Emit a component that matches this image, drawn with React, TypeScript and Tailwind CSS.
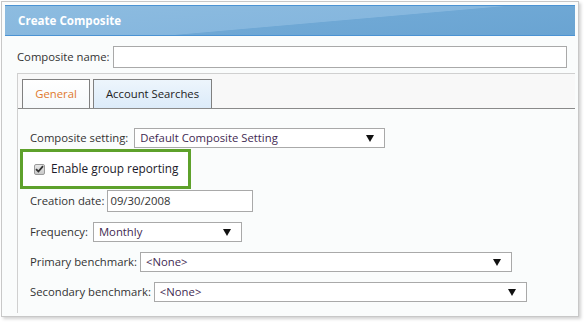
const font = { fontFamily: '"Open Sans", "Noto Sans", sans-serif' };

function Arrow() {
  return (
    <svg width="8" height="7" viewBox="0 0 8 7" className="shrink-0">
      <path d="M0 0 H8 L4 7 Z" fill="#111" />
    </svg>
  );
}

function Select({ value, className }: { value: string; className: string }) {
  return (
    <div
      className={`flex h-[20px] items-center justify-between border border-[#a9a9a9] bg-white pl-[5px] pr-[10px] text-[#3f2a52] ${className}`}
    >
      <span>{value}</span>
      <Arrow />
    </div>
  );
}

function Row({ label, children, className = '' }: { label: string; children: React.ReactNode; className?: string }) {
  return (
    <div className={`flex items-center gap-[3px] ${className}`}>
      <span className="text-[#333]">{label}</span>
      {children}
    </div>
  );
}

export default function App() {
  return (
    <div className="h-[326px] w-[588px] bg-white pl-[1px] pt-[1px] text-[11.3px] leading-none" style={font}>
      <div className="flex h-[316px] w-[578px] flex-col border border-[#c8c8c8] bg-[#fafcfc] p-[3px] shadow-[2px_2px_3px_rgba(0,0,0,0.18)]">
        {/* title bar */}
        <div className="flex h-[31px] shrink-0 items-center border-y border-[#4b93d3] bg-[linear-gradient(175deg,#8dbce0_0%,#86b7de_55%,#6fa8d5_56%,#6aa4d2_100%)] pl-[13px]">
          <span className="text-[11.6px] font-bold text-white">Create Composite</span>
        </div>

        <Row label="Composite name:" className="ml-[12px] mt-[10px]">
          <div className="h-[22px] w-[454px] border border-[#a9a9a9] bg-white" />
        </Row>

        {/* tabs panel */}
        <div className="ml-[12px] mt-[5px] flex flex-1 flex-col border-l border-t border-[#d0d0d0]">
          <div className="flex h-[35px] shrink-0 items-end gap-[3px] border-b border-[#8a8a8a] bg-[#f8f8f8] pl-[4px]">
            <div className="flex h-[29px] w-[68px] items-center justify-center border border-b-0 border-[#808080] bg-[linear-gradient(#ffffff,#f6f9fb)] text-[#e0782c]">
              General
            </div>
            <div className="flex h-[29px] w-[119px] items-center justify-center border border-b-0 border-[#808080] bg-[linear-gradient(#edf5fc,#dcebf9)] text-[#222]">
              Account Searches
            </div>
          </div>

          <div className="flex flex-col pl-[12px]">
            <Row label="Composite setting:" className="mt-[19px]">
              <Select value="Default Composite Setting" className="ml-[3px] w-[251px]" />
            </Row>

            <div className="ml-[-10px] mt-[1px] flex h-[40px] w-[171px] items-center gap-[6px] border-[3px] border-[#5ea12b] bg-white pl-[11px]">
              <div className="flex h-[11px] w-[11px] items-center justify-center rounded-[2px] border border-[#9a9a9a] bg-[linear-gradient(#e8e8e8,#c9c9c9)]">
                <svg width="9" height="8" viewBox="0 0 9 8">
                  <path d="M1 4.2 L3.4 6.5 L8 1.2" stroke="#333" strokeWidth="1.8" fill="none" />
                </svg>
              </div>
              <span className="text-[11.8px] text-[#1c1a2a]">Enable group reporting</span>
            </div>

            <Row label="Creation date:" className="mt-[1px]">
              <div className="flex h-[22px] w-[146px] items-center border border-[#a9a9a9] bg-white pl-[2px] text-[#333]">
                09/30/2008
              </div>
            </Row>

            <Row label="Frequency:" className="mt-[10px]">
              <Select value="Monthly" className="ml-[2px] w-[149px]" />
            </Row>

            <Row label="Primary benchmark:" className="mt-[10px]">
              <Select value="<None>" className="w-[372px]" />
            </Row>

            <Row label="Secondary benchmark:" className="mt-[10px]">
              <Select value="<None>" className="w-[373px]" />
            </Row>
          </div>
        </div>
      </div>
    </div>
  );
}
